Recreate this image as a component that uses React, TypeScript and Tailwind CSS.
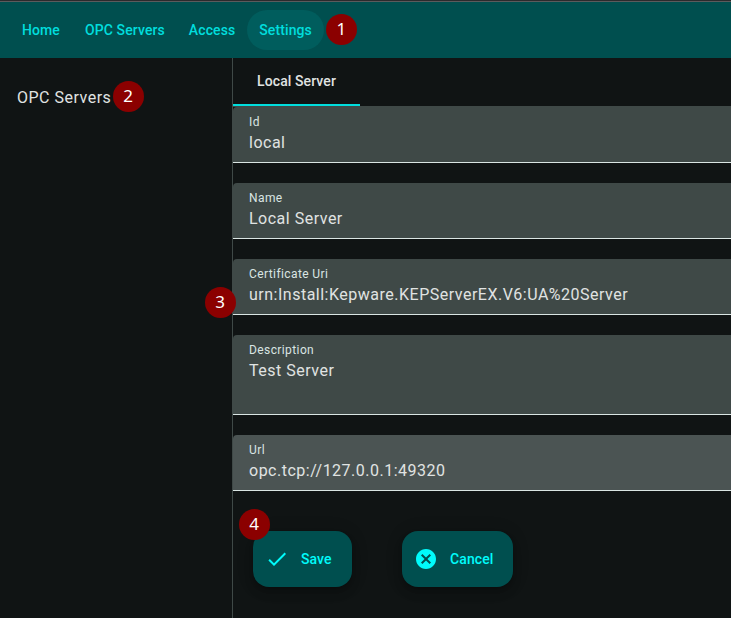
import { clsx } from "clsx";

function Badge({ n, className }: { n: number; className: string }) {
  return (
    <span
      className={clsx(
        "absolute z-10 flex size-[31px] items-center justify-center rounded-full bg-[#8b0000] pr-px pb-0.5 font-['Noto_Sans','Open_Sans',sans-serif] text-[17px] leading-none font-normal tracking-normal text-white",
        className,
      )}
    >
      {n}
    </span>
  );
}

function Field({ label, value, tall, hovered, badge }: { label: string; value: string; tall?: boolean; hovered?: boolean; badge?: number }) {
  return (
    <div
      className={clsx(
        "relative rounded-tl border-b border-[#dae5e3] px-4 pt-[7px]",
        tall ? "h-20" : "h-14",
        hovered ? "bg-[#4b5453]" : "bg-[#3f4947]",
      )}
    >
      <div className="mb-px text-xs leading-4 tracking-[0.4px] text-[#dae5e3]">{label}</div>
      <div className="text-base leading-6 tracking-[0.5px] text-[#e0e3e2]">{value}</div>
      {badge && <Badge n={badge} className="top-[28px] -left-[28px]" />}
    </div>
  );
}

const links = ["Home", "OPC Servers", "Access", "Settings"];

const buttonClass =
  "relative flex h-14 items-center rounded-2xl bg-[#004f4f] text-sm font-medium tracking-[0.1px] text-[#00fbfb] shadow-[0_3px_5px_-1px_rgba(0,0,0,0.2),0_6px_10px_0_rgba(0,0,0,0.14),0_1px_18px_0_rgba(0,0,0,0.12)]";

export default function App() {
  return (
    <div className="flex h-[618px] w-full flex-col overflow-hidden bg-[#101414] font-[Roboto,sans-serif] text-[#e0e3e2]">
      <div className="h-0.5 shrink-0 border-b border-[#5b5b5d] bg-[#2b2b2d]" />
      <header className="flex h-14 shrink-0 items-center bg-[#004f4f] pl-[10px]">
        {links.map((link) => (
          <a
            key={link}
            className={clsx(
              "relative flex h-10 items-center rounded-full px-3 text-sm font-medium tracking-[0.1px] text-[#00dddd]",
              link === "Home" && "mr-px",
              link === "Settings" && "bg-[#005d5d]",
            )}
          >
            {link}
            {link === "Settings" && <Badge n={1} className="top-1 left-[79px]" />}
          </a>
        ))}
      </header>
      <div className="flex min-h-0 flex-1">
        <aside className="w-[233px] shrink-0 border-r border-[#3f4947] pt-7 pl-[17px]">
          <div className="relative w-fit text-base leading-6 tracking-[0.5px]">
            OPC Servers
            <Badge n={2} className="-top-[5px] left-[96px]" />
          </div>
        </aside>
        <main className="min-w-0 flex-1">
          <div className="border-b border-[#3f4947]">
            <div className="flex h-12 w-[127px] items-center justify-center border-b-2 border-[#00dddd] text-sm font-medium tracking-[0.1px]">
              Local Server
            </div>
          </div>
          <div className="flex flex-col gap-5">
            <Field label="Id" value="local" />
            <Field label="Name" value="Local Server" />
            <Field label="Certificate Uri" value="urn:Install:Kepware.KEPServerEX.V6:UA%20Server" badge={3} />
            <Field label="Description" value="Test Server" tall />
            <Field label="Url" value="opc.tcp://127.0.0.1:49320" hovered />
          </div>
          <div className="flex gap-[50px] pt-10 pl-5">
            <button className={clsx(buttonClass, "w-[99px] gap-3 pl-3")}>
              <svg viewBox="0 0 24 24" className="size-6" fill="currentColor">
                <path d="M9 16.17 4.83 12l-1.42 1.41L9 19 21 7l-1.41-1.41z" />
              </svg>
              Save
              <Badge n={4} className="-top-[22px] -left-[14px]" />
            </button>
            <button className={clsx(buttonClass, "w-[111px] gap-3 pl-3")}>
              <svg viewBox="0 0 24 24" className="size-6" fill="currentColor">
                <path d="M12 2C6.47 2 2 6.47 2 12s4.47 10 10 10 10-4.47 10-10S17.53 2 12 2zm5 13.59L15.59 17 12 13.41 8.41 17 7 15.59 10.59 12 7 8.41 8.41 7 12 10.59 15.59 7 17 8.41 13.41 12 17 15.59z" />
              </svg>
              Cancel
            </button>
          </div>
        </main>
      </div>
    </div>
  );
}
